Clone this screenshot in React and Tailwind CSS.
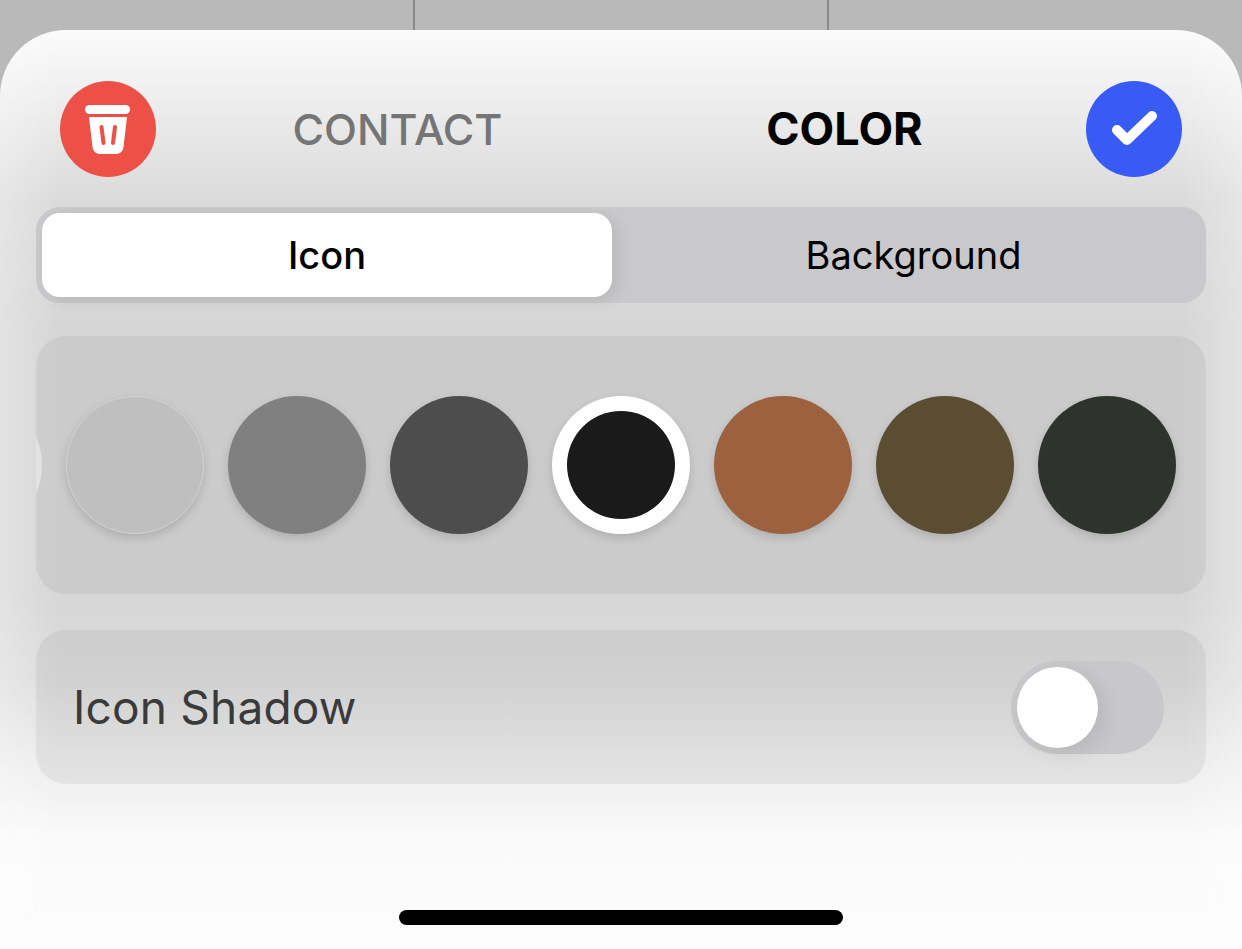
import React from 'react'

const swatches = [
    { color: 'bg-[#bfbfbf] border border-[#d2d2d2]' },
    { color: 'bg-[#808080]' },
    { color: 'bg-[#4d4d4d]' },
    { color: 'bg-[#1a1a1a]', selected: true },
    { color: 'bg-[#9c6240]' },
    { color: 'bg-[#5b4d32]' },
    { color: 'bg-[#2f332e]' },
]

const App = () => {
    return (
        <div className="w-[1242px] h-[949px] overflow-hidden bg-[#b9b9b9] font-['Inter',sans-serif]">
            <div className="flex h-[30px]">
                <div className="w-[415px] border-r-2 border-[#8a8a8a]" />
                <div className="w-[414px] border-r-2 border-[#8a8a8a]" />
            </div>

            <div className="h-[919px] rounded-t-[66px] px-9 bg-[linear-gradient(90deg,rgba(255,255,255,0.3)_0px,rgba(255,255,255,0)_60px,rgba(255,255,255,0)_1182px,rgba(255,255,255,0.3)_1242px),linear-gradient(180deg,#fbfbfb_0px,#eeeeee_70px,#dbdbdb_170px,#d6d6d6_300px,#d6d6d6_560px,#dddddd_650px,#efefef_745px,#fafafa_810px,#fcfcfc_919px)]">
                <div className="flex items-center justify-between pt-[51px] px-6">
                    <button className="w-24 h-24 rounded-full bg-[#ec5047]">
                        <svg width="96" height="96" viewBox="0 0 96 96" fill="none">
                            <rect x="25" y="24" width="45" height="9" rx="4.5" fill="white" />
                            <path d="M29 36H67L63.500 66Q62.500 73 56 73H40Q33.500 73 32.500 66Z" fill="white" />
                            <path d="M41.500 46L43.500 62M55 46L53 62" stroke="#ec5047" strokeWidth="4" strokeLinecap="round" />
                        </svg>
                    </button>
                    <div className="flex justify-center">
                        <div className="w-[447px] text-center text-[43px] leading-[56px] font-medium text-[#757575]">CONTACT</div>
                        <div className="w-[447px] text-center text-[45px] leading-[56px] font-bold text-black">COLOR</div>
                    </div>
                    <button className="w-24 h-24 rounded-full bg-[#385af5]">
                        <svg width="96" height="96" viewBox="0 0 96 96" fill="none">
                            <path d="M31 49L41 59L66 35" stroke="white" strokeWidth="10" strokeLinecap="round" strokeLinejoin="round" />
                        </svg>
                    </button>
                </div>

                <div className="flex h-24 mt-[30px] p-1.5 rounded-3xl bg-[#c9c9cc]">
                    <div className="w-[570px] flex items-center justify-center rounded-[18px] bg-white text-[38px] font-medium text-black shadow-[6px_4px_14px_rgba(0,0,0,0.08)]">Icon</div>
                    <div className="flex-1 flex items-center justify-center pl-[15px] text-[38px] text-black">Background</div>
                </div>

                <div className="flex items-center gap-6 h-[258px] mt-[33px] rounded-[30px] overflow-hidden bg-black/5">
                    <div className="shrink-0 w-[138px] h-[138px] -ml-[132px] rounded-full bg-[#e2e2e2]" />
                    {swatches.map((swatch, i) => (
                        swatch.selected ? (
                            <div key={i} className="shrink-0 w-[138px] h-[138px] flex items-center justify-center rounded-full bg-white shadow-[0_4px_10px_rgba(0,0,0,0.14)]">
                                <div className={`w-[108px] h-[108px] rounded-full ${swatch.color}`} />
                            </div>
                        ) : (
                            <div key={i} className={`shrink-0 w-[138px] h-[138px] rounded-full shadow-[0_4px_10px_rgba(0,0,0,0.14)] ${swatch.color}`} />
                        )
                    ))}
                </div>

                <div className="flex items-center justify-between h-[154px] mt-9 pl-[37px] pr-[42px] rounded-[30px] bg-black/5">
                    <span className="text-[46px] tracking-[0.2px] text-[#3a3a3a]">Icon Shadow</span>
                    <div className="w-[153px] h-[93px] p-1.5 rounded-full bg-[#c8c8cb]">
                        <div className="w-[81px] h-[81px] rounded-full bg-white shadow-[8px_6px_20px_rgba(0,0,0,0.08)]" />
                    </div>
                </div>

                <div className="w-[444px] h-[15px] mx-auto mt-[126px] rounded-full bg-black" />
            </div>
        </div>
    )
}

export default App
